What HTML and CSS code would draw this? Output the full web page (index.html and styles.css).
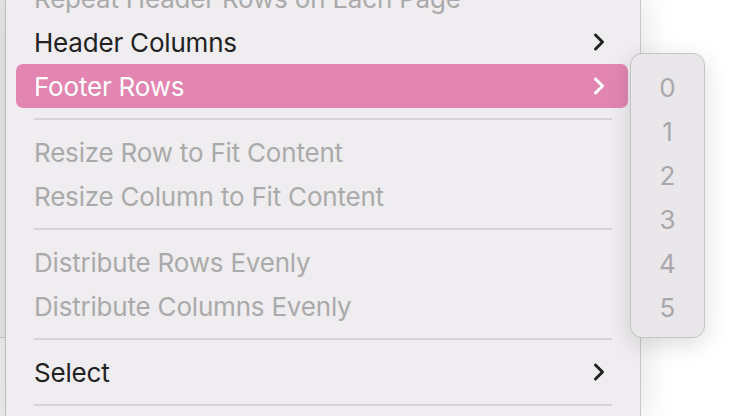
FILE: index.html
```html
<!DOCTYPE html>
<html>
<head>
<meta charset="utf-8">
<link rel="stylesheet" href="styles.css">
</head>
<body>
<div class="screen">
  <div class="edge">
    <div class="edge-top"></div>
    <div class="edge-bottom"></div>
  </div>
  <div class="menu">
    <div class="item disabled first"><span>Repeat Header Rows on Each Page</span></div>
    <div class="item"><span>Header Columns</span><svg class="chev" viewBox="0 0 14 20"><path d="M3.5 3 L10.5 10 L3.5 17"/></svg></div>
    <div class="item active"><span>Footer Rows</span><svg class="chev" viewBox="0 0 14 20"><path d="M3.5 3 L10.5 10 L3.5 17"/></svg></div>
    <div class="sep"></div>
    <div class="item disabled"><span>Resize Row to Fit Content</span></div>
    <div class="item disabled"><span>Resize Column to Fit Content</span></div>
    <div class="sep"></div>
    <div class="item disabled"><span>Distribute Rows Evenly</span></div>
    <div class="item disabled"><span>Distribute Columns Evenly</span></div>
    <div class="sep"></div>
    <div class="item"><span>Select</span><svg class="chev" viewBox="0 0 14 20"><path d="M3.5 3 L10.5 10 L3.5 17"/></svg></div>
    <div class="sep"></div>
  </div>
  <div class="rest"></div>
  <div class="submenu">
    <div class="num">0</div>
    <div class="num">1</div>
    <div class="num">2</div>
    <div class="num">3</div>
    <div class="num">4</div>
    <div class="num">5</div>
  </div>
</div>
</body>
</html>
```

FILE: styles.css
```css
html, body {
  margin: 0;
  padding: 0;
  background: #ffffff;
}
.screen {
  position: relative;
  width: 742px;
  height: 416px;
  overflow: hidden;
  display: flex;
  font-family: Inter, "Liberation Sans", sans-serif;
  font-size: 26px;
}
.edge {
  width: 5px;
  flex: none;
  display: flex;
  flex-direction: column;
  border-right: 1px solid #c3c2c3;
}
.edge-top {
  height: 337px;
  background: #e4e3e4;
  border-bottom: 1px solid #c9c8c9;
}
.edge-bottom {
  flex: 1;
  background: #ebeaeb;
}
.menu {
  width: 634px;
  flex: none;
  background: #efedef;
  border-right: 1px solid #c9c7c9;
  box-shadow: 6px 0 28px rgba(0,0,0,0.10);
  display: flex;
  flex-direction: column;
  position: relative;
  z-index: 1;
}
.rest {
  flex: 1;
  background: #ffffff;
}
.item {
  height: 44px;
  flex: none;
  margin: 0 12px 0 10px;
  padding: 0 22px 0 18px;
  border-radius: 7px;
  display: flex;
  align-items: center;
  justify-content: space-between;
  color: #222222;
  letter-spacing: -0.2px;
}
.item.first {
  margin-top: -24px;
}
.item.disabled {
  color: #abaaab;
}
.item.active {
  background: #e286b1;
  color: #ffffff;
}
.chev {
  width: 14px;
  height: 20px;
  fill: none;
  stroke: #222222;
  stroke-width: 3;
  stroke-linecap: round;
  stroke-linejoin: round;
}
.item.active .chev {
  stroke: #ffffff;
}
.sep {
  height: 22px;
  flex: none;
  display: flex;
  align-items: center;
  margin: 0 28px 0 28px;
}
.sep::before {
  content: "";
  display: block;
  width: 100%;
  height: 2px;
  background: #d6d4d6;
}
.submenu {
  position: absolute;
  left: 630px;
  top: 53px;
  width: 75px;
  height: 285px;
  box-sizing: border-box;
  background: #e9e7ea;
  border: 1px solid #c6c4c6;
  border-radius: 12px;
  box-shadow: 0 6px 24px rgba(0,0,0,0.14);
  z-index: 2;
  display: flex;
  flex-direction: column;
  padding-top: 11px;
}
.num {
  height: 44px;
  flex: none;
  display: flex;
  align-items: center;
  justify-content: center;
  color: #a9a7aa;
}
```
